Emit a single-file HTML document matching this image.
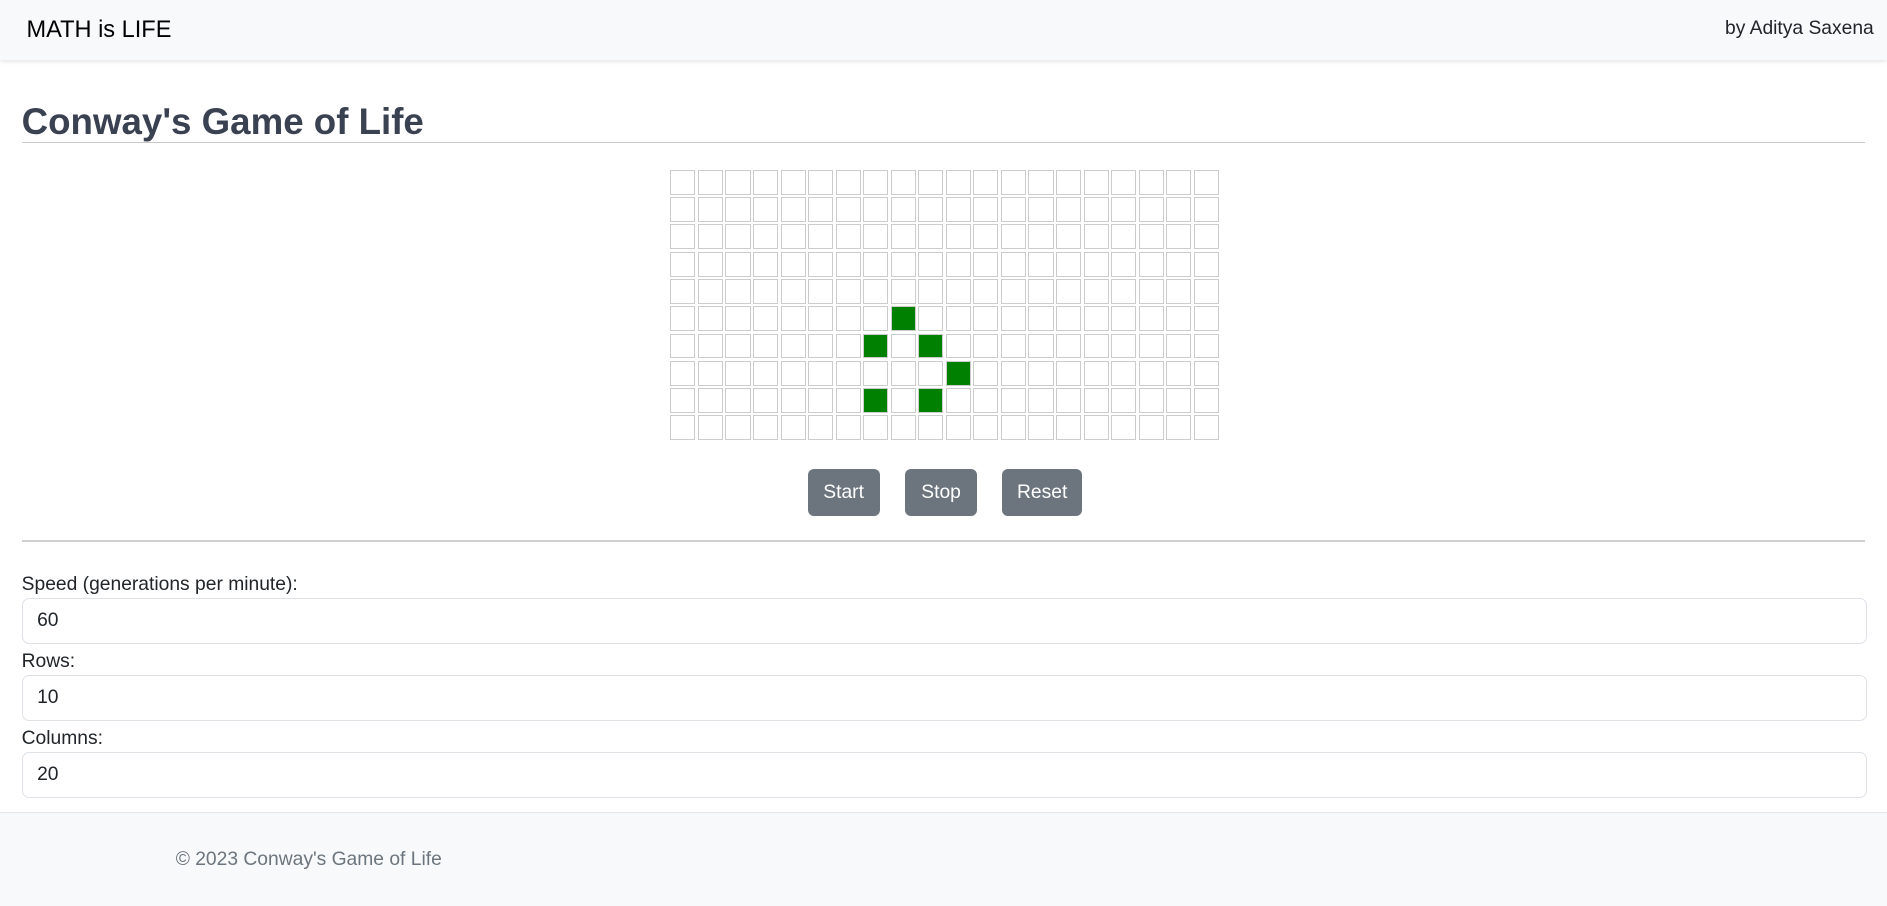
<!DOCTYPE html>
<html><head><meta charset="utf-8">
<style>
html,body{margin:0;padding:0;}
body{zoom:1.20344;width:1568px;height:752px;overflow:hidden;font-family:"Liberation Sans",sans-serif;color:#212529;background:#fff;position:relative;}
.nav{position:absolute;left:0;top:0;width:1568px;height:50px;background:#f8f9fa;box-shadow:0 1px 4px rgba(0,0,0,.15);}
.brand{position:absolute;left:22px;top:13px;font-size:19.6px;color:#000;}
.by{position:absolute;right:11px;top:15px;font-size:16px;color:#212529;}
h1{position:absolute;left:18px;top:84px;margin:0;font-size:30.5px;font-weight:bold;color:#3a4150;}
.hr1{position:absolute;left:18px;width:1532px;top:118px;height:1px;background:#c8c8c8;}
.grid{position:absolute;left:557px;top:141px;display:grid;grid-template-columns:repeat(20,20.9px);grid-auto-rows:20.7px;column-gap:2px;row-gap:2px;}
.grid div{box-sizing:border-box;border:1px solid #ccc;background:#fff;}
.grid div.g{background:#008000;}
.btn{position:absolute;top:390px;height:39px;background:#6c757d;color:#fff;border-radius:5px;font-size:16px;line-height:40px;text-align:center;}
.hr2{position:absolute;left:18px;width:1532px;top:449px;height:1px;background:#d0d0d0;}
.lbl{position:absolute;left:18px;font-size:16px;}
.inp{position:absolute;left:18px;width:1533px;height:38px;box-sizing:border-box;border:1px solid #dee2e6;border-radius:6px;font-size:16px;line-height:37px;padding-left:12px;}
.foot{position:absolute;left:0;top:675px;width:1568px;height:77px;background:#f8f9fa;border-top:1px solid #e5e5e5;}
.foot span{position:absolute;left:146px;top:30px;font-size:16px;color:#6c757d;}
</style></head><body>
<div class="nav"><div class="brand">MATH is LIFE</div><div class="by">by Aditya Saxena</div></div>
<h1>Conway's Game of Life</h1>
<div class="hr1"></div>
<div class="grid" id="g"></div>
<div class="btn" style="left:671px;width:60px">Start</div>
<div class="btn" style="left:752px;width:60px">Stop</div>
<div class="btn" style="left:833px;width:66px">Reset</div>
<div class="hr2"></div>
<div class="lbl" style="top:477px">Speed (generations per minute):</div>
<div class="inp" style="top:497px">60</div>
<div class="lbl" style="top:541px">Rows:</div>
<div class="inp" style="top:561px">10</div>
<div class="lbl" style="top:605px">Columns:</div>
<div class="inp" style="top:625px">20</div>
<div class="foot"><span>© 2023 Conway's Game of Life</span></div>
<script>
var on={"5,8":1,"6,7":1,"6,9":1,"7,10":1,"8,7":1,"8,9":1};
var h="";for(var r=0;r<10;r++)for(var c=0;c<20;c++)h+='<div'+(on[r+","+c]?' class="g"':'')+'></div>';
document.getElementById("g").innerHTML=h;
</script>
</body></html>
